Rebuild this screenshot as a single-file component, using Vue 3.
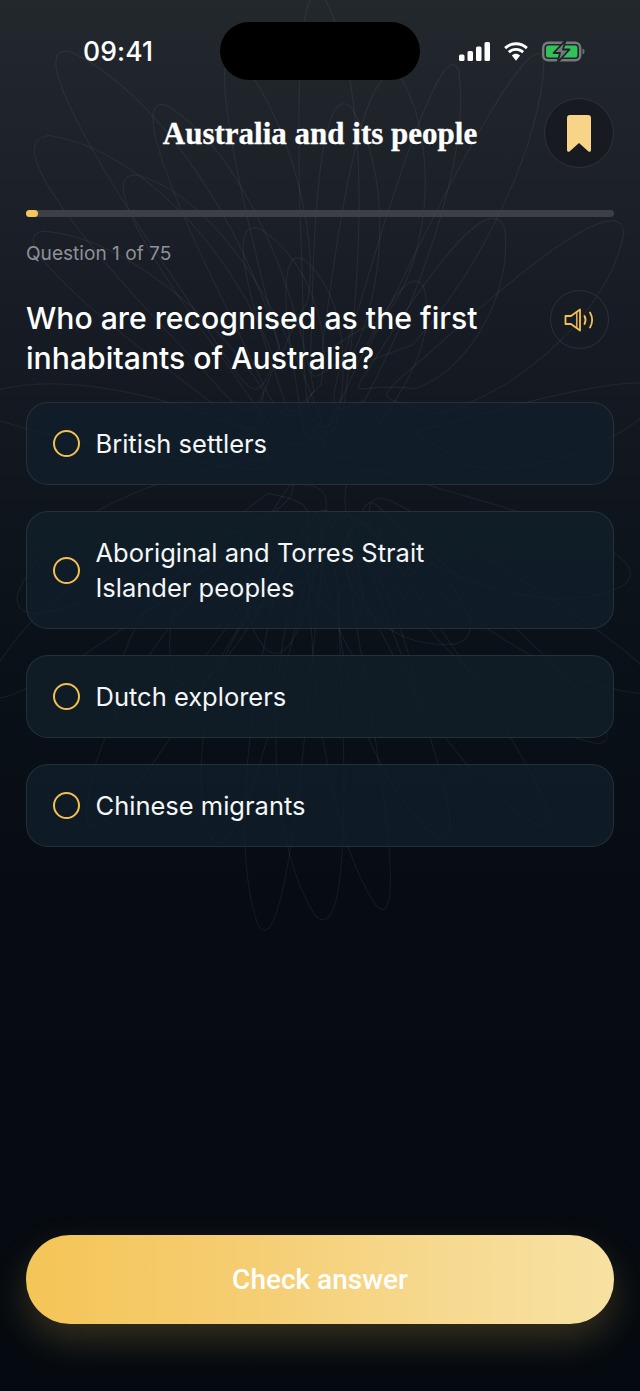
<script setup>
const options = [
  'British settlers',
  'Aboriginal and Torres Strait Islander peoples',
  'Dutch explorers',
  'Chinese migrants'
]

// tips of the faint scribble loops behind the page, [x, y, width]
const tips = [
  [320, -2, 46], [66, 55, 60], [397, 80, 62], [163, 108, 52], [347, 108, 50], [133, 178, 56],
  [45, 140, 70], [235, 60, 44], [455, 70, 40], [540, 60, 44], [262, 925, 42], [320, 915, 52],
  [215, 838, 50], [540, 822, 44], [440, 835, 46], [380, 905, 40], [90, 820, 48], [120, 720, 58],
  [-20, 400, 44], [-10, 690, 50], [20, 600, 62], [40, 235, 50], [660, 395, 48], [650, 690, 46],
  [620, 230, 60], [625, 580, 62], [600, 740, 48], [500, 225, 56], [180, 680, 60], [460, 640, 62],
  [270, 650, 50], [405, 700, 44], [350, 620, 40], [300, 260, 40], [255, 230, 46], [420, 285, 40]
]
const cx = 320
const cy = 470
const loops = tips.map(([x, y, w], i) => {
  const dx = x - cx
  const dy = y - cy
  const len = Math.hypot(dx, dy)
  const nx = -dy / len
  const ny = dx / len
  // loops start away from the middle so they don't meet in one point
  const start = 0.12 + ((i * 7) % 5) * 0.07
  const pt = (t, s) => `${(cx + dx * t + nx * s).toFixed(1)} ${(cy + dy * t + ny * s).toFixed(1)}`
  return `M${pt(start, w * 0.5)}C${pt(0.55, w * 1.1)} ${pt(0.85, w * 0.9)} ${pt(1, w * 0.1)}C${pt(1.08, -w * 0.55)} ${pt(0.7, -w * 0.5)} ${pt(0.45, -w * 0.4)}S${pt(start - 0.1, -w * 0.5)} ${pt(start, w * 0.5)}Z`
})
</script>

<template>
  <div class="page">
    <svg class="scribble" viewBox="0 0 640 1391" width="640" height="1391" fill="none">
      <path v-for="(d, i) in loops" :key="i" :d="d" />
    </svg>

    <div class="status">
      <span class="time">09:41</span>
      <div class="island"></div>
      <div class="status-icons">
        <svg width="32" height="19" viewBox="0 0 32 19" fill="#fff">
          <rect x="0" y="12.5" width="5.5" height="6.5" rx="1.5" />
          <rect x="8.5" y="9" width="5.5" height="10" rx="1.5" />
          <rect x="17" y="4.5" width="5.5" height="14.5" rx="1.5" />
          <rect x="25.5" y="0" width="5.5" height="19" rx="1.5" />
        </svg>
        <svg class="wifi" width="28" height="21" viewBox="0 0 26 19" fill="#fff">
          <path d="M13 3.6c3.6 0 6.8 1.4 9.2 3.7l1.8-1.9A16 16 0 0 0 13 1 16 16 0 0 0 2 5.4l1.8 1.9A13.2 13.2 0 0 1 13 3.6z" />
          <path d="M13 8.8c2.2 0 4.2.9 5.7 2.3l1.8-1.9A10.900 10.900 0 0 0 13 6.200a10.900 10.900 0 0 0-7.500 3l1.800 1.900A8.200 8.200 0 0 1 13 8.800z" />
          <path d="M13 11.600c-1.500 0-2.800.6-3.800 1.500L13 18l3.800-4.900a5.500 5.500 0 0 0-3.800-1.500z" />
        </svg>
        <svg class="battery" width="43" height="23" viewBox="0 -1 43 23" fill="none">
          <rect x="1.200" y="1.700" width="37" height="17.600" rx="5" stroke="#75797c" stroke-width="2.400" />
          <rect x="4" y="4.500" width="31.400" height="12" rx="2.500" fill="#33c25a" />
          <path d="M40.500 7.500c1.300.4 2 1.500 2 3s-.7 2.600-2 3z" fill="#6d7174" />
          <path d="M23.500 -0.500 11.500 12h6.500l-2.500 9.500L27.500 8.500h-6.500z" fill="#75797c" stroke="#1f2429" stroke-width="1.800" stroke-linejoin="round" />
        </svg>
      </div>
    </div>

    <header class="header">
      <span></span>
      <h2 class="title">Australia and its people</h2>
      <button class="round bookmark" aria-label="Bookmark">
        <svg width="24" height="37" viewBox="0 0 24 37">
          <path d="M3 0h18a3 3 0 0 1 3 3v32c0 1.700-1.500 2.400-2.800 1.300L12 28l-9.200 8.300C1.500 37.400 0 36.700 0 35V3a3 3 0 0 1 3-3z" fill="#f8d488" />
        </svg>
      </button>
    </header>

    <div class="progress"><div class="progress-fill" :style="{ width: '12px' }"></div></div>
    <p class="count">Question 1 of 75</p>

    <div class="question">
      <h1>Who are recognised as the first inhabitants of Australia?</h1>
      <button class="round speaker" aria-label="Listen">
        <svg width="32" height="26" viewBox="0 0 32 24" fill="none" stroke="#f4c04f" stroke-width="1.800" stroke-linecap="round" stroke-linejoin="round">
          <path d="M1.500 8h5.500l9-6.500v21L7 16H1.500z" />
          <path d="M12.800 4v16" stroke-width="1.400" />
          <path d="M20.500 8c1.300 2.500 1.300 5.500 0 8" />
          <path d="M26 4.500c2.700 4.700 2.700 10.300 0 15" />
        </svg>
      </button>
    </div>

    <div class="options">
      <div v-for="option in options" :key="option" class="option">
        <span class="radio"></span>
        <span class="option-text">{{ option }}</span>
      </div>
    </div>

    <button class="check">Check answer</button>
  </div>
</template>

<style scoped>
.page {
  position: relative;
  box-sizing: border-box;
  width: 640px;
  height: 1391px;
  padding: 0 26px 67px;
  display: flex;
  flex-direction: column;
  overflow: hidden;
  font-family: Inter, "Liberation Sans", sans-serif;
  color: #fff;
  background: linear-gradient(180deg, #23282d 0, #1b1f27 220px, #141922 380px, #0b1118 640px, #070c13 900px, #050a10 1391px);
}
.page > * {
  position: relative;
}
.page > .scribble {
  position: absolute;
  left: 0;
  top: 0;
}
.scribble path {
  stroke: rgba(255, 255, 255, 0.055);
  stroke-width: 1.2;
}

.status {
  display: grid;
  grid-template-columns: 220px 200px 1fr;
  padding-top: 22px;
  margin: 0 -26px;
  height: 58px;
  align-items: center;
}
.time {
  padding-left: 83px;
  font-size: 26.5px;
  font-weight: 500;
  letter-spacing: 0.1px;
}
.island {
  height: 58px;
  background: #000;
  border-radius: 29px;
}
.status-icons {
  display: flex;
  align-items: center;
  padding-left: 39px;
}
.wifi {
  margin-left: 11px;
}
.battery {
  margin-left: 12px;
}

.header {
  display: grid;
  grid-template-columns: 1fr auto 1fr;
  align-items: center;
  margin-top: 18px;
}
.title {
  margin: 2px 0 0;
  font-family: "Liberation Serif", serif;
  font-size: 31px;
  font-weight: 700;
  white-space: nowrap;
  -webkit-text-stroke: 0.3px #fff;
}
.round {
  padding: 0;
  display: flex;
  align-items: center;
  justify-content: center;
  border: 1.5px solid #2b323d;
  border-radius: 50%;
  background: transparent;
  box-sizing: border-box;
}
.bookmark {
  justify-self: end;
  width: 70px;
  height: 70px;
  background: #171b21;
}
.progress {
  height: 7px;
  margin-top: 42px;
  border-radius: 4px;
  background: #3c4045;
}
.progress-fill {
  height: 100%;
  border-radius: 4px;
  background: #f7c65a;
}
.count {
  margin: 24px 0 0;
  font-size: 19.1px;
  line-height: 24px;
  color: #8e9297;
}

.question {
  display: flex;
  justify-content: space-between;
  align-items: flex-start;
  margin-top: 25px;
  padding-right: 5px;
}
.question h1 {
  margin: 8px 0 0;
  width: 480px;
  font-size: 30.2px;
  line-height: 40px;
  font-weight: 500;
}
.speaker {
  flex: none;
  width: 59px;
  height: 59px;
}

.options {
  display: flex;
  flex-direction: column;
  gap: 26px;
  margin-top: 24px;
}
.option {
  display: flex;
  align-items: center;
  gap: 16px;
  padding: 23px 26px;
  border: 1px solid rgba(255, 255, 255, 0.09);
  border-radius: 22px;
  background: rgba(16, 31, 43, 0.8);
}
.radio {
  flex: none;
  width: 27px;
  height: 27px;
  box-sizing: border-box;
  border: 2.5px solid #f4c04f;
  border-radius: 50%;
}
.option-text {
  max-width: 350px;
  margin-left: -0.5px;
  font-size: 25.5px;
  line-height: 35px;
  color: #f5f6f6;
}

.check {
  margin-top: auto;
  height: 89px;
  border: none;
  border-radius: 44px;
  font-family: Roboto, "Liberation Sans", sans-serif;
  font-size: 28px;
  font-weight: 500;
  color: #fff;
  background: linear-gradient(90deg, #f4c557 0, #f5cb6c 30%, #f6d98f 70%, #f7e1a2 100%);
  box-shadow: 0 16px 36px rgba(245, 197, 87, 0.2);
}
</style>
